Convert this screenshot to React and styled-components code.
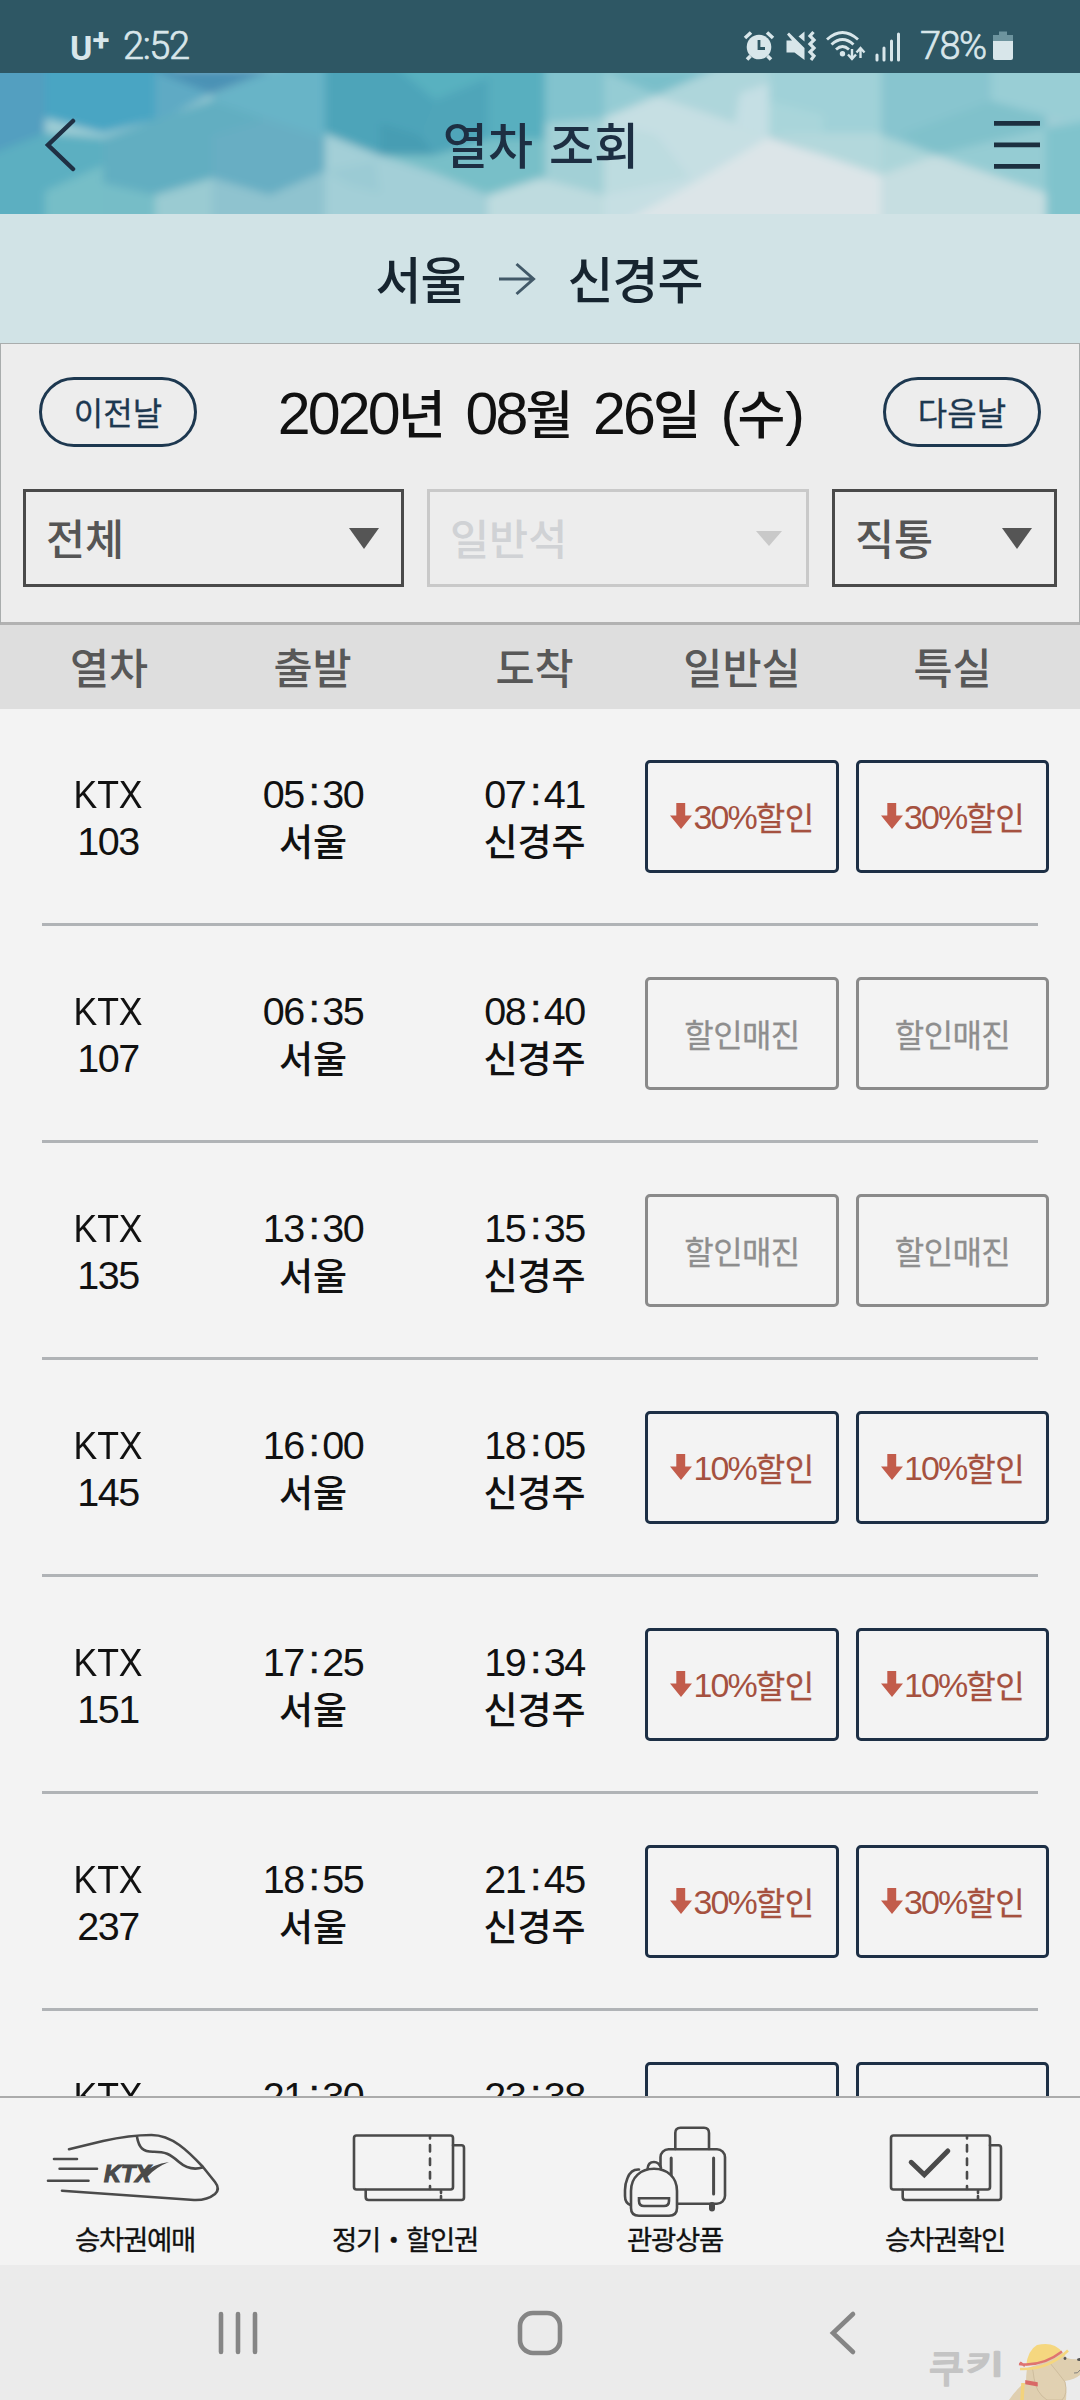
import React from "react";
import styled, { createGlobalStyle } from "styled-components";

const trains = [
  { no: "103", dep: "05:30", arr: "07:41", sale: "30%" },
  { no: "107", dep: "06:35", arr: "08:40" },
  { no: "135", dep: "13:30", arr: "15:35" },
  { no: "145", dep: "16:00", arr: "18:05", sale: "10%" },
  { no: "151", dep: "17:25", arr: "19:34", sale: "10%" },
  { no: "237", dep: "18:55", arr: "21:45", sale: "30%" },
  { no: "163", dep: "21:30", arr: "23:38", sale: "30%" },
];

const headerShapes = [
  ["-20,-20 45,-20 45,160 -20,160", "#539fc0"],
  ["-20,85 45,60 103,65 103,160 -20,160", "#5bafc1"],
  ["45,-20 155,-20 155,47 103,60 45,45", "#4aa5c3"],
  ["45,118 103,92 103,160 45,160", "#76bec7"],
  ["155,-20 212,21 155,50", "#5eaac4"],
  ["150,-4 275,-4 212,21", "#4b92b5"],
  ["212,22 270,-2 325,-20 325,65 212,27", "#68b4c7"],
  ["103,65 212,27 325,65 325,98 270,122 212,105 155,122 103,141", "#62aec1"],
  ["212,62 266,46 325,65 325,98 270,122 212,105", "#68aec3"],
  ["103,110 155,122 155,160 103,160", "#76bdc7"],
  ["155,122 212,105 212,160 155,160", "#9acbd2"],
  ["212,105 270,122 325,98 325,160 212,160", "#8fc3cf"],
  ["325,-20 545,-20 545,80 435,88 380,82 325,60", "#4da4b9"],
  ["380,-20 488,-20 488,5 435,27", "#58b1c0"],
  ["380,50 420,62 435,82 380,82", "#479db3"],
  ["435,27 488,5 488,60 435,82 420,62", "#50a5b9"],
  ["488,-20 545,-20 545,70 488,72", "#58afbf"],
  ["325,63 380,83 435,100 490,122 490,160 325,160", "#a3cfd7"],
  ["325,98 375,88 380,120 350,112", "#9bcbd4"],
  ["380,82 435,82 488,66 545,66 545,110 488,122 435,100", "#78bfc8"],
  ["488,122 540,105 604,122 604,160 488,160", "#bedbdf"],
  ["545,-20 604,-20 604,45 545,50", "#82c3ce"],
  ["545,50 604,45 604,122 545,105", "#a2d0d6"],
  ["598,-4 717,-4 657,22", "#7abfca"],
  ["604,0 657,22 604,45", "#95ccd4"],
  ["657,22 712,-2 769,-20 769,62 712,42", "#aed6db"],
  ["740,20 769,10 769,62 735,50", "#c5dfe4"],
  ["604,45 657,23 712,42 769,62 769,160 604,160", "#c6dfe3"],
  ["604,48 657,62 690,105 604,122", "#bddce0"],
  ["769,-20 881,-20 881,62 769,62", "#a0d1d8"],
  ["769,28 823,42 823,62 769,62", "#a9d5da"],
  ["769,60 881,60 881,102 823,82", "#b3d8dc"],
  ["769,64 823,82 881,102 881,160 604,160 690,112", "#dce5e8"],
  ["881,-20 991,-20 991,66 936,82 881,62", "#88c5cf"],
  ["900,62 991,28 1046,38 1046,55 936,82", "#80c1cb"],
  ["881,62 936,82 881,102", "#acd5d9"],
  ["936,82 1046,120 1046,160 881,160 881,102", "#c6dee1"],
  ["991,-20 1100,-20 1100,52 1080,52 991,28", "#99ced5"],
  ["1046,55 1100,46 1100,160 1046,160", "#80c3cc"],
  ["936,82 1046,55 1046,120", "#95ccd3"],
];

const tabs = [
  { icon: "train", label: "승차권예매" },
  { icon: "ticket", label: "정기・할인권" },
  { icon: "luggage", label: "관광상품" },
  { icon: "check", label: "승차권확인" },
];

const TrainShape = () => (
  <>
    <path d="M24 23.3L58 15Q85 9 106.5 9C127 9 143 25 158 41L170 56Q175.5 63 170 68Q162 74.5 149 74L17 64.7" />
    <path d="M92 11C94 22 98 25.7 108 25.7C120 25.5 125 28 134 36C141 42 149 44 157.5 41.5" />
    <path d="M9 33H32M14.6 42.7H52M3 54.7H43.5" />
    <KtxText x="59" y="56" textLength="47" lengthAdjust="spacingAndGlyphs">
      KTX
    </KtxText>
    <path d="M97 48Q108 38 124 36Q111 41 102 51Z" fill="#4a4a4a" stroke="none" />
  </>
);

const TicketShape = ({ checked }) => (
  <g transform={checked ? "translate(-3 0)" : undefined}>
    <rect x="39" y="9.5" width="99" height="54" rx="2.5" />
    <path d="M138 19.3H146.5Q149 19.3 149 22V71.5Q149 74 146.5 74H53.5Q50.7 74 50.7 71V64" />
    <path d="M115 10v2.5M115 19v6.5M115 32.5v6.5M115 46v6.5M115 60v3M126 65v2M126 70v3" />
    {checked && <path d="M59.2 36.3L72.3 48.7L95.8 25" strokeWidth="5" />}
  </g>
);

const LuggageShape = () => (
  <>
    <path d="M90.3 23V7Q90.3 1.7 95.5 1.7H119Q124 1.7 124 7V23" />
    <rect x="75.5" y="23.3" width="64.5" height="54.4" rx="8" />
    <path d="M86.2 32V50M128.6 32V68" strokeWidth="3" />
    <path d="M127 79V82.5" strokeWidth="6" />
    <path d="M54 43.5Q46 43 42.5 52Q40 58 40 64V70Q40 77 45.5 79" />
    <path d="M62.5 43Q63 36 69 36Q74 36 76 42" fill="#f3f3f3" />
    <path d="M46 65C46 51 56 42.8 69 42.8C82 42.8 92 51 92 65V82Q92 89.7 84 89.7H54Q46 89.7 46 82Z" fill="#f3f3f3" />
    <path d="M54 72.3H84V75Q84 80 79 80H59Q54 80 54 75Z" />
  </>
);

const Time = ({ value }) => {
  const [h, m] = value.split(":");
  return (
    <Digits>
      {h}
      <Colon>:</Colon>
      {m}
    </Digits>
  );
};

const Seat = ({ sale }) => (
  <SeatButton $open={!!sale}>
    {sale ? (
      <>
        <svg width="22" height="26" viewBox="0 0 22 26">
          <path d="M6.3 0H15.2V12.5H22L11 26L0 12.5H6.3Z" fill="#c25c4b" />
        </svg>
        <Percent>{sale}</Percent>할인
      </>
    ) : (
      "할인매진"
    )}
  </SeatButton>
);

const App = () => {
  return (
    <Screen>
      <GlobalStyle />
      <StatusBar>
        <Carrier>
          U<sup>+</sup>
        </Carrier>
        <Clock>2:52</Clock>
        <StatusIcons />
        <Battery>78%</Battery>
        <svg width="20" height="30" viewBox="0 0 20 30">
          <path d="M6 0.5H14V4H20V10H0V4H6Z" fill="#6d949e" />
          <path d="M0 10H20V27Q20 29 18 29H2Q0 29 0 27Z" fill="#d8e6ea" />
        </svg>
      </StatusBar>

      <Header>
        <HeaderArt viewBox="0 0 1080 141" preserveAspectRatio="none">
          <defs>
            <filter id="soft" x="0" y="0" width="1" height="1">
              <feGaussianBlur stdDeviation="4.5" />
            </filter>
          </defs>
          <g filter="url(#soft)">
            <rect x="-20" y="-20" width="1120" height="180" fill="#9fcdd5" />
            {headerShapes.map(([points, fill], i) => (
              <polygon key={i} points={points} fill={fill} />
            ))}
          </g>
        </HeaderArt>
        <svg width="34" height="54" viewBox="0 0 34 54" fill="none" stroke="#1f3044" strokeWidth="4.5">
          <path d="M30 3L5 27L30 51" strokeLinecap="round" />
        </svg>
        <Title>열차 조회</Title>
        <svg width="46" height="48" viewBox="0 0 46 48" fill="none" stroke="#1c3040" strokeWidth="4.7">
          <path d="M0 2.4H46M0 23.9H46M0 45.4H46" />
        </svg>
      </Header>

      <Route>
        <span>서울</span>
        <svg width="38" height="34" viewBox="0 0 38 34" fill="none" stroke="#425968" strokeWidth="3">
          <path d="M1 17H35M18.5 2L35.5 17L18.5 32" />
        </svg>
        <span>신경주</span>
      </Route>

      <SearchPanel>
        <DateRow>
          <DayButton>이전날</DayButton>
          <DateText>
            <b>2020</b>년 <b>08</b>월 <b>26</b>일 <b>(</b>수<b>)</b>
          </DateText>
          <DayButton>다음날</DayButton>
        </DateRow>
        <Filters>
          <Select $w={381}>
            전체
            <Caret />
          </Select>
          <Select $w={382} $disabled>
            일반석
            <Caret $disabled />
          </Select>
          <Select $w={225}>
            직통
            <Caret />
          </Select>
        </Filters>
      </SearchPanel>

      <TableHead>
        <Col $w={218}>열차</Col>
        <Col $w={189}>출발</Col>
        <Col $w={238} $pad={17}>도착</Col>
        <Seats>
          <Col $w={194}>일반실</Col>
          <Col $w={193}>특실</Col>
        </Seats>
      </TableHead>

      <TrainList>
        {trains.map((t) => (
          <React.Fragment key={t.no}>
            <TrainRow>
              <Col $w={216}>
                <TrainName>KTX</TrainName>
                <Digits>{t.no}</Digits>
              </Col>
              <Col $w={194}>
                <Time value={t.dep} />
                <Station>서울</Station>
              </Col>
              <Col $w={235} $pad={14}>
                <Time value={t.arr} />
                <Station>신경주</Station>
              </Col>
              <Seats>
                <Seat sale={t.sale} />
                <Seat sale={t.sale} />
              </Seats>
            </TrainRow>
            <Divider />
          </React.Fragment>
        ))}
      </TrainList>

      <TabBar>
        {tabs.map(({ icon, label }) => (
          <Tab key={label}>
            <TabIcon viewBox="0 0 180 96">
              {icon === "train" && <TrainShape />}
              {icon === "ticket" && <TicketShape />}
              {icon === "luggage" && <LuggageShape />}
              {icon === "check" && <TicketShape checked />}
            </TabIcon>
            {label}
          </Tab>
        ))}
      </TabBar>

      <NavBar>
        <NavIcon viewBox="0 0 50 50">
          <path d="M8 6V44M25 6V44M42 6V44" />
        </NavIcon>
        <NavIcon viewBox="0 0 50 50">
          <rect x="5" y="5" width="40" height="40" rx="13" />
        </NavIcon>
        <NavIcon viewBox="0 0 50 50">
          <path d="M36 6L16 25L36 44" />
        </NavIcon>
        <Sticker />
      </NavBar>
    </Screen>
  );
};

const StatusIcons = () => (
  <StatusSvg viewBox="0 0 160 32" fill="none" stroke="#d8e6ea">
    <circle cx="16" cy="17" r="12.3" fill="#d8e6ea" stroke="none" />
    <path d="M2 8L8 2.5M24 2.5L30 8M7.5 26L4 29.5M24.5 26L28 29.5" strokeWidth="3.6" />
    <path d="M16 10V18.5H22" stroke="#2e5764" strokeWidth="2.8" />
    <path d="M43.5 10.5H49L44 4.5L46 2.5L61.5 18V30L51.5 22.5H43.5ZM61.5 1.5V11.5L55.5 6.5Z" fill="#d8e6ea" stroke="none" />
    <path d="M70.5 2L67 6L71 10L67 14L71 18L67 22L71 26L68 30" strokeWidth="3.2" />
    <path d="M84 9.5Q99.5 -4.5 115 9.5M88.5 14.5Q99.5 4.5 110.5 14.5M93 19.5Q99.5 13.5 106 19.5" strokeWidth="2.9" />
    <circle cx="99.5" cy="23.8" r="2.7" fill="#d8e6ea" stroke="none" />
    <path d="M109 19V28M105 24.5L109 29L113 24.5M117.5 28V18.5M113.5 22.5L117.5 18L121.5 22.5" strokeWidth="2.4" />
    <path d="M134 25V30M141 18V30M148.5 11V30M155.5 4V30" strokeWidth="3" strokeLinecap="round" />
  </StatusSvg>
);

const Sticker = () => (
  <StickerSvg viewBox="0 0 160 60">
    <StickerText x="9" y="42" fontSize="38">쿠</StickerText>
    <StickerText x="46" y="34" fontSize="26" textLength="38" lengthAdjust="spacingAndGlyphs">키</StickerText>
    <path d="M107 28Q106 36 106 42Q97 48 89 60H146Q147 48 145 41Q156 39 161 34V19Q152 20 147 18L141 11Q125 24 107 28Z" fill="#dfcfb0" />
    <path d="M130 23Q139 34 145 42Q148 54 142 60H127Q116 53 114 38Q113 30 112 27" fill="#e1d1b2" stroke="#c9b798" strokeWidth="0.8" />
    <path d="M103 43L102 60" stroke="#f3d37c" strokeWidth="3.5" />
    <path d="M106 41L117 43V45.5L106 43.5Z" fill="#d96a67" stroke="#d96a67" strokeWidth="1.5" />
    <path d="M106 26Q108 10 117 5Q134 1 142 12Q126 23 106 26Z" fill="#f5d77f" />
    <path d="M100 29Q128 30 148 10.5" fill="none" stroke="#f5d77f" strokeWidth="2.5" />
    <path d="M99 24Q122 27 142 11.5M100 22.5L105 26" fill="none" stroke="#df7470" strokeWidth="2.3" />
    <circle cx="145" cy="18.5" r="1.4" fill="#555" />
    <ellipse cx="159.5" cy="19.5" rx="2.5" ry="1.6" fill="#555" />
    <path d="M154 33Q158 34 160 30" fill="none" stroke="#777" strokeWidth="0.9" />
  </StickerSvg>
);

const GlobalStyle = createGlobalStyle`
  * {
    box-sizing: border-box;
  }

  body {
    margin: 0;
    background: #f3f3f3;
  }
`;

const Screen = styled.div`
  width: 1080px;
  height: 2400px;
  display: flex;
  flex-direction: column;
  overflow: hidden;
  background: #f3f3f3;
  font-family: "Noto Sans CJK KR", sans-serif;
  color: #111;
`;

const StatusBar = styled.div`
  height: 73px;
  display: flex;
  align-items: center;
  padding: 18px 67px 0 70px;
  background: #2e5764;
  color: #d8e6ea;
  font-family: Roboto, sans-serif;
`;

const Carrier = styled.span`
  width: 53px;
  font-size: 34px;
  font-weight: 700;
  line-height: 40px;
  padding-top: 4px;

  sup {
    font-size: 31px;
    line-height: 0;
    vertical-align: 9px;
  }
`;

const Clock = styled.span`
  font-size: 38px;
  letter-spacing: -1.4px;
  font-weight: 300;
  -webkit-text-stroke: 0.7px;
`;

const StatusSvg = styled.svg`
  width: 160px;
  height: 32px;
  margin-left: auto;
`;

const Battery = styled.span`
  margin: 0 6px 0 17px;
  width: 67px;
  font-size: 38px;
  letter-spacing: -1.6px;
  font-weight: 300;
  -webkit-text-stroke: 0.7px;
`;

const Header = styled.header`
  position: relative;
  height: 141px;
  display: flex;
  align-items: center;
  justify-content: space-between;
  padding: 2px 40px 0 43px;

  svg {
    position: relative;
  }
`;

const HeaderArt = styled.svg`
  && {
    position: absolute;
    inset: 0;
    width: 100%;
    height: 100%;
  }
`;

const Title = styled.h1`
  position: relative;
  margin: 0 0 5px 11px;
  font-size: 49px;
  font-weight: 500;
  color: #1d2f43;
  word-spacing: 5px;
`;

const Route = styled.div`
  height: 129px;
  display: flex;
  align-items: center;
  justify-content: center;
  gap: 32px;
  padding-right: 2px;
  background: #d1e3e6;
  color: #16242f;
  font-size: 50px;
  font-weight: 500;
  letter-spacing: -1px;

  span {
    margin-top: -4px;
  }
`;

const SearchPanel = styled.section`
  height: 282px;
  padding: 33px 22px 0;
  border: 1px solid #a9adad;
  border-bottom: 3px solid #b2b2b2;
  background: #ededed;
`;

const DateRow = styled.div`
  display: flex;
  align-items: center;
  justify-content: space-between;
  padding: 0 16px;
`;

const DayButton = styled.button`
  width: 158px;
  height: 70px;
  padding: 0 0 3px;
  border: 3px solid #1d3850;
  border-radius: 35px;
  background: none;
  color: #1d3850;
  font-family: inherit;
  font-size: 32px;
  -webkit-text-stroke: 0.3px;
`;

const DateText = styled.div`
  height: 70px;
  line-height: 70px;
  font-size: 52px;
  font-weight: 500;
  word-spacing: 8px;
  white-space: nowrap;

  b {
    font-family: "Liberation Sans", sans-serif;
    font-weight: 400;
    font-size: 59px;
    letter-spacing: -2.8px;
  }
`;

const Filters = styled.div`
  display: flex;
  gap: 23px;
  margin-top: 42px;
`;

const Select = styled.div`
  width: ${(p) => p.$w}px;
  height: 98px;
  display: flex;
  align-items: center;
  justify-content: space-between;
  padding: 0 ${(p) => (p.$disabled ? 24 : 22)}px 4px 20px;
  border: 3px solid ${(p) => (p.$disabled ? "#c9c9c9" : "#4a4a4a")};
  color: ${(p) => (p.$disabled ? "#d0d2d5" : "#555")};
  font-size: 42.5px;
  font-weight: 500;
`;

const Caret = styled.i`
  margin-top: 5px;
  border: solid transparent;
  border-width: ${(p) => (p.$disabled ? "15px 13.5px 0" : "21px 15.5px 0")};
  border-top-color: ${(p) => (p.$disabled ? "#c9c9c9" : "#555")};
`;

const Col = styled.div`
  width: ${(p) => p.$w}px;
  padding-left: ${(p) => p.$pad || 0}px;
  text-align: center;
`;

const Seats = styled.div`
  display: flex;
  gap: 17px;
`;

const TableHead = styled.div`
  height: 84px;
  padding-bottom: 4px;
  display: flex;
  align-items: center;
  background: #dedede;
  color: #585858;
  font-size: 42.5px;
  font-weight: 500;
`;

const TrainList = styled.div`
  height: 1387px;
  overflow: hidden;
`;

const TrainRow = styled.div`
  height: 214px;
  padding-top: 1px;
  display: flex;
  align-items: center;
`;

const Divider = styled.div`
  height: 3px;
  margin: 0 42px;
  background: #b0b3b6;
`;

const Digits = styled.div`
  height: 47px;
  line-height: 48px;
  font-family: "Liberation Sans", sans-serif;
  font-size: 39.5px;
  letter-spacing: -1.5px;
`;

const TrainName = styled(Digits)`
  letter-spacing: 0;
  transform: scaleX(0.9);
`;

const Colon = styled.span`
  margin: 0 4px 0 5px;
  line-height: 0;
  vertical-align: 3px;
  -webkit-text-stroke: 0.6px;
`;

const Station = styled.div`
  height: 47px;
  line-height: 46px;
  font-size: 37px;
  font-weight: 500;
`;

const SeatButton = styled.button`
  width: 194px;
  height: 113px;
  display: flex;
  align-items: center;
  justify-content: center;
  padding: 0 0 2px;
  border: 3px solid ${(p) => (p.$open ? "#1d2f45" : "#8a8a8a")};
  border-radius: 5px;
  background: none;
  color: ${(p) => (p.$open ? "#a5513f" : "#8e8e8e")};
  font-family: inherit;
  font-size: 32px;
  letter-spacing: -0.6px;
  -webkit-text-stroke: 0.3px;

  & + & {
    width: 193px;
  }
`;

const Percent = styled.span`
  font-family: "Liberation Sans", sans-serif;
  font-size: 34px;
  letter-spacing: -1.9px;
  margin: 3px 0 0 1px;
  -webkit-text-stroke: 0;
`;

const TabBar = styled.nav`
  height: 169px;
  display: flex;
  border-top: 2px solid #ababab;
`;

const Tab = styled.div`
  width: 270px;
  display: flex;
  flex-direction: column;
  align-items: center;
  padding-top: 28px;
  font-size: 27.5px;
  line-height: 32px;
  letter-spacing: -1.3px;
  -webkit-text-stroke: 0.3px;
`;

const TabIcon = styled.svg`
  width: 180px;
  height: 96px;
  fill: none;
  stroke: #4a4a4a;
  stroke-width: 2.6;
  stroke-linecap: round;
`;

const KtxText = styled.text`
  font-family: "Liberation Sans", sans-serif;
  font-size: 23px;
  font-weight: 700;
  font-style: italic;
  letter-spacing: 0;
  fill: #4a4a4a;
  stroke: #4a4a4a;
  stroke-width: 1.2px;
`;

const NavBar = styled.div`
  position: relative;
  height: 135px;
  display: flex;
  align-items: center;
  justify-content: center;
  gap: 252px;
  background: #ebebeb;
`;

const NavIcon = styled.svg`
  width: 50px;
  height: 50px;
  fill: none;
  stroke: #858585;
  stroke-width: 4.6;
  stroke-linecap: round;
`;

const StickerSvg = styled.svg`
  position: absolute;
  right: 0;
  bottom: 0;
  width: 160px;
  height: 60px;
`;

const StickerText = styled.text`
  fill: #c4c4c4;
  stroke: #c4c4c4;
  stroke-width: 2px;
  stroke-linejoin: round;
`;

export default App;
